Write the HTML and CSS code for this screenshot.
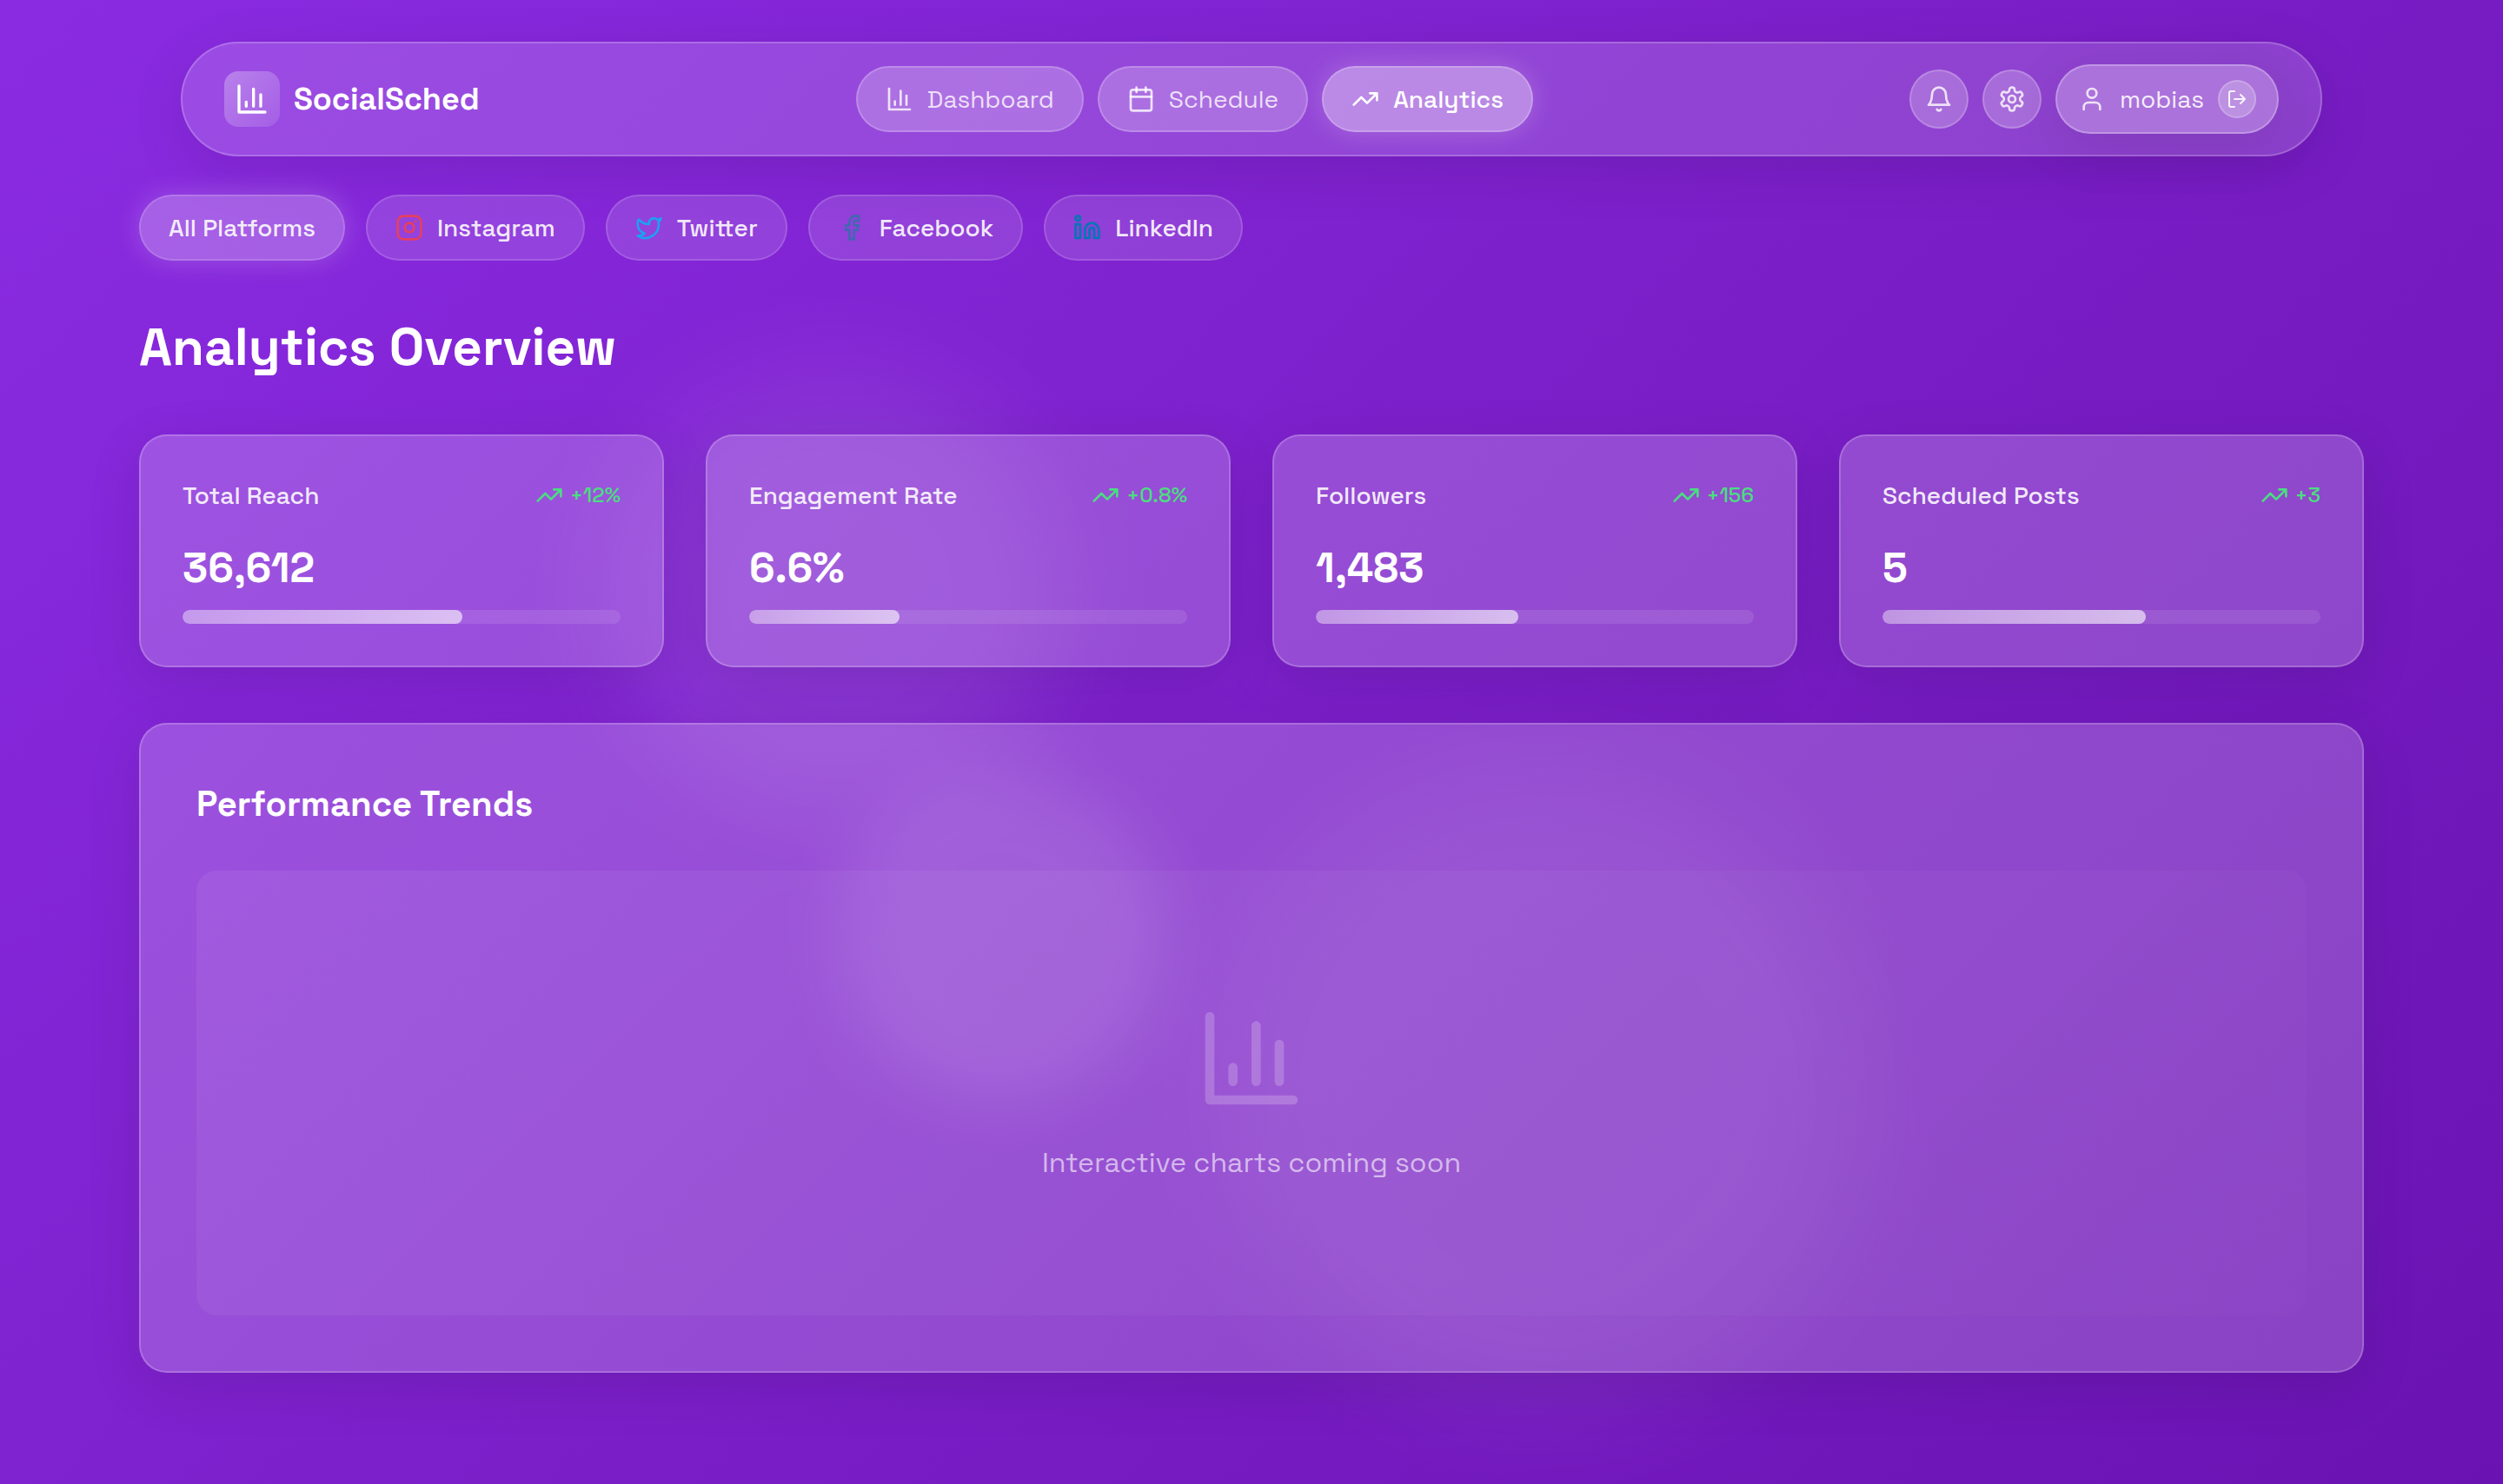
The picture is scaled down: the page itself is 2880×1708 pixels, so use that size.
FILE: index.html
```html
<!DOCTYPE html>
<html lang="en">
<head>
<meta charset="utf-8">
<meta name="viewport" content="width=device-width, initial-scale=1">
<title>SocialSched – Analytics</title>
<link rel="stylesheet" href="styles.css">
</head>
<body>
<svg class="sprite" aria-hidden="true">
  <symbol id="chart" viewBox="0 0 24 24"><path d="M3 3v18h18M18 17V9M13 17V5M8 17v-3"/></symbol>
  <symbol id="calendar" viewBox="0 0 24 24"><rect x="3" y="4" width="18" height="18" rx="2"/><path d="M16 2v4M8 2v4M3 10h18"/></symbol>
  <symbol id="trend" viewBox="0 0 24 24"><path d="M22 7l-8.500 8.500-5-5L2 17M16 7h6v6"/></symbol>
  <symbol id="bell" viewBox="0 0 24 24"><path d="M6 8a6 6 0 0 1 12 0c0 7 3 9 3 9H3s3-2 3-9M10.300 21a1.940 1.940 0 0 0 3.400 0"/></symbol>
  <symbol id="gear" viewBox="0 0 24 24"><path d="M12.220 2h-.44a2 2 0 0 0-2 2v.18a2 2 0 0 1-1 1.730l-.43.25a2 2 0 0 1-2 0l-.15-.08a2 2 0 0 0-2.730.73l-.22.38a2 2 0 0 0 .73 2.730l.15.1a2 2 0 0 1 1 1.720v.51a2 2 0 0 1-1 1.740l-.15.09a2 2 0 0 0-.73 2.730l.22.38a2 2 0 0 0 2.730.73l.15-.08a2 2 0 0 1 2 0l.43.25a2 2 0 0 1 1 1.730V20a2 2 0 0 0 2 2h.44a2 2 0 0 0 2-2v-.18a2 2 0 0 1 1-1.730l.43-.25a2 2 0 0 1 2 0l.15.08a2 2 0 0 0 2.730-.73l.22-.39a2 2 0 0 0-.73-2.730l-.15-.08a2 2 0 0 1-1-1.740v-.5a2 2 0 0 1 1-1.740l.15-.09a2 2 0 0 0 .73-2.730l-.22-.38a2 2 0 0 0-2.730-.73l-.15.08a2 2 0 0 1-2 0l-.43-.25a2 2 0 0 1-1-1.730V4a2 2 0 0 0-2-2z"/><circle cx="12" cy="12" r="3"/></symbol>
  <symbol id="user" viewBox="0 0 24 24"><path d="M19 21v-2a4 4 0 0 0-4-4H9a4 4 0 0 0-4 4v2"/><circle cx="12" cy="7" r="4"/></symbol>
  <symbol id="logout" viewBox="0 0 24 24"><path d="M9 21H5a2 2 0 0 1-2-2V5a2 2 0 0 1 2-2h4M16 17l5-5-5-5M21 12H9"/></symbol>
  <symbol id="instagram" viewBox="0 0 24 24"><rect x="2" y="2" width="20" height="20" rx="5"/><path d="M16 11.370A4 4 0 1 1 12.630 8 4 4 0 0 1 16 11.370zM17.500 6.500h.01"/></symbol>
  <symbol id="twitter" viewBox="0 0 24 24"><path d="M22 4s-.7 2.100-2 3.400c1.600 10-9.400 17.300-18 11.600 2.200.1 4.400-.6 6-2C3 15.500.5 9.600 3 5c2.200 2.600 5.600 4.100 9 4-.9-4.200 4-6.600 7-3.800 1.100 0 3-1.200 3-1.200z"/></symbol>
  <symbol id="facebook" viewBox="0 0 24 24"><path d="M18 2h-3a5 5 0 0 0-5 5v3H7v4h3v8h4v-8h3l1-4h-4V7a1 1 0 0 1 1-1h3z"/></symbol>
  <symbol id="linkedin" viewBox="0 0 24 24"><path d="M16 8a6 6 0 0 1 6 6v7h-4v-7a2 2 0 0 0-4 0v7h-4v-7a6 6 0 0 1 6-6z"/><rect x="2" y="9" width="4" height="12"/><circle cx="4" cy="4" r="2"/></symbol>
</svg>

<div class="orbs" aria-hidden="true">
  <span class="orb orb-top"></span>
  <span class="orb orb-large"></span>
  <span class="orb orb-small"></span>
</div>

<div class="page">
  <header class="topbar">
    <div class="brand">
      <span class="brand-mark"><svg class="icon icon-lg"><use href="#chart"/></svg></span>
      <span class="brand-name">SocialSched</span>
    </div>
    <nav class="nav">
      <a class="pill nav-link" href="#dashboard"><svg class="icon"><use href="#chart"/></svg>Dashboard</a>
      <a class="pill nav-link" href="#schedule"><svg class="icon"><use href="#calendar"/></svg>Schedule</a>
      <a class="pill nav-link is-active" href="#analytics" aria-current="page"><svg class="icon"><use href="#trend"/></svg>Analytics</a>
    </nav>
    <div class="actions">
      <button class="round" type="button" aria-label="Notifications"><svg class="icon"><use href="#bell"/></svg></button>
      <button class="round" type="button" aria-label="Settings"><svg class="icon"><use href="#gear"/></svg></button>
      <div class="account">
        <svg class="icon"><use href="#user"/></svg>
        <span class="account-name">mobias</span>
        <button class="round round-sm" type="button" aria-label="Log out"><svg class="icon icon-sm"><use href="#logout"/></svg></button>
      </div>
    </div>
  </header>

  <main class="content">
    <div class="filters">
      <button class="pill filter is-active" type="button">All Platforms</button>
      <button class="pill filter" type="button"><svg class="icon instagram"><use href="#instagram"/></svg>Instagram</button>
      <button class="pill filter" type="button"><svg class="icon twitter"><use href="#twitter"/></svg>Twitter</button>
      <button class="pill filter" type="button"><svg class="icon facebook"><use href="#facebook"/></svg>Facebook</button>
      <button class="pill filter" type="button"><svg class="icon linkedin"><use href="#linkedin"/></svg>LinkedIn</button>
    </div>

    <h1 class="title">Analytics Overview</h1>

    <section class="stats">
      <article class="glass stat">
        <div class="stat-head"><h2 class="stat-label">Total Reach</h2><span class="change"><svg class="icon"><use href="#trend"/></svg>+12%</span></div>
        <div class="stat-value">36,612</div>
        <div class="bar"><div class="bar-fill" style="width:63.9%"></div></div>
      </article>
      <article class="glass stat">
        <div class="stat-head"><h2 class="stat-label">Engagement Rate</h2><span class="change"><svg class="icon"><use href="#trend"/></svg>+0.8%</span></div>
        <div class="stat-value">6.6%</div>
        <div class="bar"><div class="bar-fill" style="width:34.3%"></div></div>
      </article>
      <article class="glass stat">
        <div class="stat-head"><h2 class="stat-label">Followers</h2><span class="change"><svg class="icon"><use href="#trend"/></svg>+156</span></div>
        <div class="stat-value">1,483</div>
        <div class="bar"><div class="bar-fill" style="width:46.2%"></div></div>
      </article>
      <article class="glass stat">
        <div class="stat-head"><h2 class="stat-label">Scheduled Posts</h2><span class="change"><svg class="icon"><use href="#trend"/></svg>+3</span></div>
        <div class="stat-value">5</div>
        <div class="bar"><div class="bar-fill" style="width:60.2%"></div></div>
      </article>
    </section>

    <section class="glass trends">
      <h2 class="trends-title">Performance Trends</h2>
      <div class="placeholder">
        <svg class="icon icon-xl"><use href="#chart"/></svg>
        <p class="placeholder-text">Interactive charts coming soon</p>
      </div>
    </section>
  </main>
</div>
</body>
</html>
```
FILE: styles.css
```css
*, *::before, *::after { box-sizing: border-box; }

body {
  margin: 0;
  min-height: 100vh;
  position: relative;
  overflow-x: hidden;
  background: linear-gradient(135deg, #8a2be2 0%, #7b1fc9 50%, #6a13b2 100%);
  color: #fff;
  font-family: "Space Grotesk", Inter, "Liberation Sans", sans-serif;
  font-size: 28px;
  line-height: 40px;
}

h1, h2, p { margin: 0; }
button { font: inherit; color: inherit; cursor: pointer; }
a { color: inherit; text-decoration: none; }

.sprite { position: absolute; width: 0; height: 0; }
.icon {
  flex: none;
  width: 32px;
  height: 32px;
  fill: none;
  stroke: currentColor;
  stroke-width: 2;
  stroke-linecap: round;
  stroke-linejoin: round;
}
.icon-sm { width: 24px; height: 24px; }
.icon-lg { width: 40px; height: 40px; }
.icon-xl { width: 128px; height: 128px; opacity: .2; }

/* soft lights behind the glass */
.orbs { position: absolute; inset: 0; overflow: hidden; pointer-events: none; }
.orb { position: absolute; border-radius: 50%; background: #fff; filter: blur(60px); }
.orb-top { width: 520px; height: 520px; left: 704px; top: 424px; opacity: .08; }
.orb-large { width: 740px; height: 740px; left: 1410px; top: 890px; opacity: .06; }
.orb-small { width: 380px; height: 380px; left: 962px; top: 890px; opacity: .1; filter: blur(36px); }

.page {
  position: relative;
  max-width: 2560px;
  margin: 0 auto;
  padding: 48px 0;
}

.topbar {
  display: flex;
  align-items: center;
  justify-content: space-between;
  height: 132px;
  margin: 0 48px 44px;
  padding: 0 48px;
  border: 2px solid rgba(255, 255, 255, .2);
  border-radius: 66px;
  background: rgba(255, 255, 255, .16);
  box-shadow: 0 16px 64px rgba(0, 0, 0, .1);
}
.brand { display: flex; align-items: center; gap: 16px; }
.brand-mark {
  display: grid;
  place-items: center;
  width: 64px;
  height: 64px;
  border-radius: 16px;
  background: linear-gradient(135deg, rgba(255, 255, 255, .3), rgba(255, 255, 255, .1));
}
.brand-name { font-size: 36px; font-weight: 600; }

.nav { display: flex; gap: 16px; }
.pill {
  display: flex;
  align-items: center;
  gap: 16px;
  height: 76px;
  padding: 0 32px;
  border: 2px solid rgba(255, 255, 255, .2);
  border-radius: 38px;
}
.nav-link { background: rgba(255, 255, 255, .22); color: rgba(255, 255, 255, .8); }
.nav-link.is-active {
  background: rgba(255, 255, 255, .37);
  color: #fff;
  font-weight: 500;
  box-shadow: 0 0 32px rgba(255, 255, 255, .2);
}

.actions { display: flex; align-items: center; gap: 16px; }
.round {
  display: grid;
  place-items: center;
  width: 68px;
  height: 68px;
  padding: 0;
  border: 2px solid rgba(255, 255, 255, .2);
  border-radius: 50%;
  background: rgba(255, 255, 255, .22);
  color: rgba(255, 255, 255, .8);
}
.round-sm { width: 44px; height: 44px; color: rgba(255, 255, 255, .9); }
.account {
  display: flex;
  align-items: center;
  gap: 16px;
  height: 80px;
  padding: 0 24px;
  border: 2px solid rgba(255, 255, 255, .25);
  border-radius: 40px;
  background: rgba(255, 255, 255, .26);
  color: rgba(255, 255, 255, .8);
  box-shadow: 0 16px 64px rgba(0, 0, 0, .1);
}
.account-name { color: rgba(255, 255, 255, .9); }

.filters { display: flex; flex-wrap: wrap; gap: 24px; margin-bottom: 64px; }
.filter {
  background: rgba(255, 255, 255, .13);
  border-color: rgba(255, 255, 255, .15);
  color: rgba(255, 255, 255, .9);
  font-weight: 500;
}
.filter.is-active {
  background: rgba(255, 255, 255, .26);
  box-shadow: 0 0 32px rgba(255, 255, 255, .2);
}
.instagram { color: #e4405f; }
.twitter { color: #1da1f2; }
.facebook { color: #4267b2; }
.linkedin { color: #0077b5; }

.title { margin-bottom: 64px; font-size: 60px; line-height: 72px; font-weight: 700; }

.glass {
  border: 2px solid rgba(255, 255, 255, .2);
  border-radius: 32px;
  background: rgba(255, 255, 255, .2);
  box-shadow: 0 16px 64px rgba(0, 0, 0, .1);
}
.stats { display: grid; grid-template-columns: repeat(4, 1fr); gap: 48px; margin-bottom: 64px; }
.stat { padding: 48px; }
.stat-head { display: flex; align-items: center; justify-content: space-between; margin-bottom: 32px; }
.stat-label { font-size: 28px; font-weight: 500; color: rgba(255, 255, 255, .9); }
.change { display: flex; align-items: center; gap: 8px; font-size: 24px; font-weight: 500; color: #4ade80; }
.stat-value { margin-bottom: 16px; font-size: 48px; line-height: 64px; font-weight: 700; }
.bar { height: 16px; border-radius: 8px; background: rgba(255, 255, 255, .1); overflow: hidden; }
.bar-fill {
  height: 100%;
  border-radius: 8px;
  background: linear-gradient(90deg, rgba(255, 255, 255, .35), rgba(255, 255, 255, .6));
}

.trends { padding: 64px; }
.trends-title { margin-bottom: 48px; font-size: 40px; line-height: 56px; font-weight: 600; }
.placeholder {
  display: flex;
  flex-direction: column;
  align-items: center;
  justify-content: center;
  gap: 32px;
  min-height: 512px;
  border-radius: 24px;
  background: linear-gradient(135deg, rgba(255, 255, 255, .06), rgba(255, 255, 255, .01));
}
.placeholder-text { font-size: 32px; line-height: 48px; color: rgba(255, 255, 255, .6); }
```
